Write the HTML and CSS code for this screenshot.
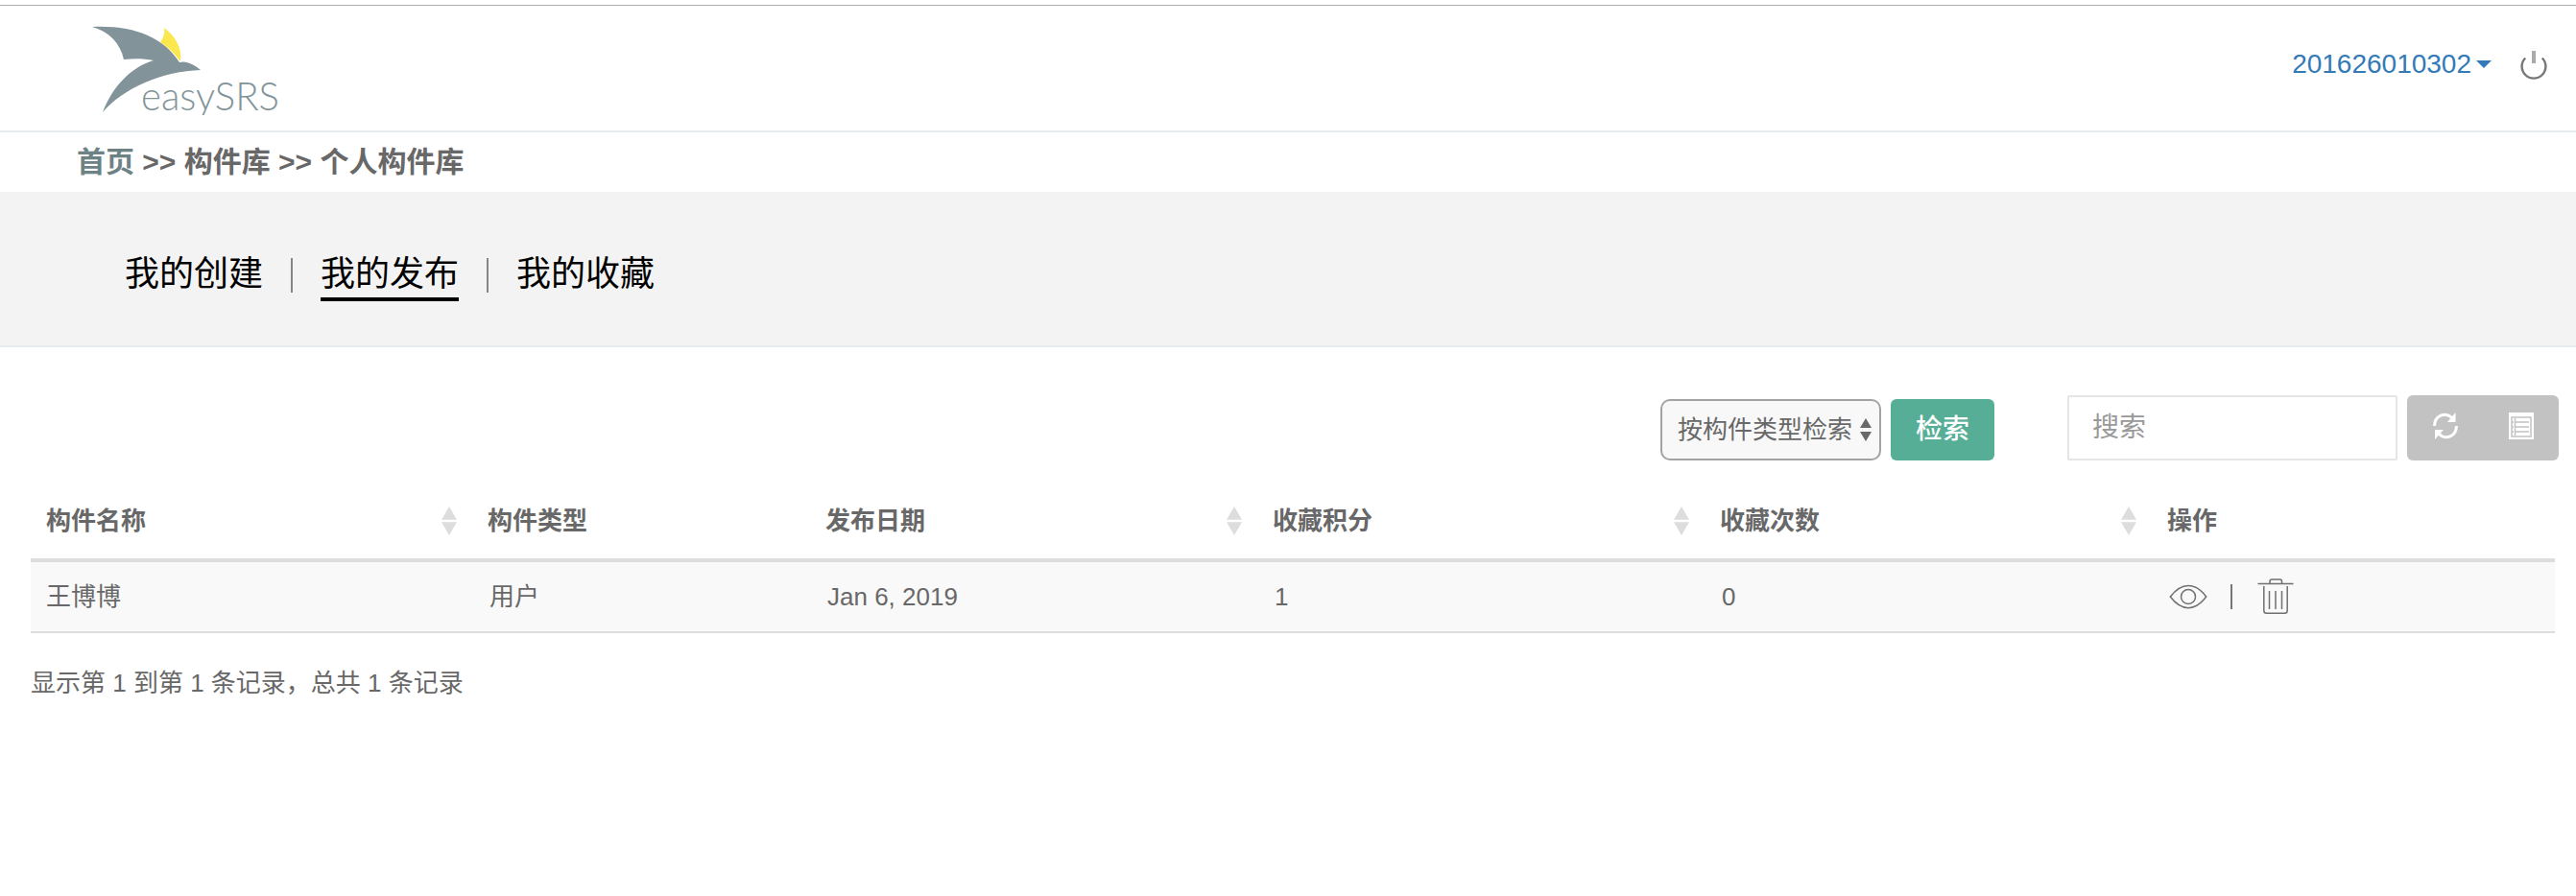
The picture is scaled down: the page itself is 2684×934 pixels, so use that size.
FILE: index.html
```html
<!DOCTYPE html>
<html lang="zh-CN">
<head>
    <meta charset="utf-8">
    <title>easySRS</title>
    <link rel="stylesheet" href="styles.css">
</head>
<body>

<header class="header">
    <a class="logo" href="#">
        <svg width="200" height="112" viewBox="0 0 200 112">
            <path fill="#82949a" d="M4 20C46 18 78 30 95 57C102 55 110 59 117 65C78 66 36 84 15 109C25 83 44 62 68 55C58 53 48 53 37 54C33 37 22 25 4 20Z"/>
            <path fill="#fbe74e" d="M79 21C91 30 98 42 96 56C89 47 83 41 75 36C78 32 80 27 79 21Z"/>
            <text class="logo-text" x="55" y="107" textLength="144" lengthAdjust="spacingAndGlyphs">easySRS</text>
        </svg>
    </a>
    <div class="user">
        <a class="user-name" href="#">201626010302<span class="caret"></span></a>
        <svg class="power" width="28" height="32" viewBox="0 0 28 32" fill="none" stroke="#777">
            <path stroke-width="2.4" d="M5.2 8.5A12.4 12.4 0 1 0 22.8 8.5"/>
            <path stroke="#aaa" stroke-width="4" d="M14 1V14"/>
        </svg>
    </div>
</header>

<div class="breadcrumb"><a href="#">首页</a> &gt;&gt; 构件库 &gt;&gt; 个人构件库</div>

<nav class="tabs">
    <a href="#">我的创建</a>
    <i></i>
    <a class="active" href="#">我的发布</a>
    <i></i>
    <a href="#">我的收藏</a>
</nav>

<div class="toolbar">
    <div class="type-select">按构件类型检索
        <svg width="12" height="24" viewBox="0 0 12 24" fill="#686868"><path d="M6 0L12 10H0ZM6 24L0 14H12Z"/></svg>
    </div>
    <button class="btn-search">检索</button>
    <input class="search" type="text" placeholder="搜索">
    <div class="btn-group">
        <svg width="26" height="28" viewBox="0 0 26 28">
            <path fill="none" stroke="#fff" stroke-width="3" d="M1.6 14C1.6 3 13-1 19.5 5.5M24.4 14C24.4 25 13 29 6.5 22.500"/>
            <path fill="#fff" d="M23.500 0V10H15ZM2 28V18H11Z"/>
        </svg>
        <svg width="26" height="28" viewBox="0 0 26 28">
            <path fill="#fff" d="M0 0H26V28H0Z"/>
            <path fill="none" stroke="#c2c2c2" stroke-width="1.500" d="M3 5H23V25H3ZM3 10H5M7 10H21M3 15H5M7 15H21M3 20H5M7 20H21M6.500 6V24"/>
        </svg>
    </div>
</div>

<table class="table">
    <colgroup>
        <col class="col-name"><col class="col-type"><col class="col-wide"><col class="col-wide"><col class="col-wide"><col>
    </colgroup>
    <thead>
        <tr>
            <th><div class="th-inner sortable">构件名称</div></th>
            <th><div class="th-inner">构件类型</div></th>
            <th><div class="th-inner sortable">发布日期</div></th>
            <th><div class="th-inner sortable">收藏积分</div></th>
            <th><div class="th-inner sortable">收藏次数</div></th>
            <th><div class="th-inner">操作</div></th>
        </tr>
    </thead>
    <tbody>
        <tr>
            <td>王博博</td>
            <td>用户</td>
            <td>Jan 6, 2019</td>
            <td>1</td>
            <td>0</td>
            <td>
                <div class="actions">
                    <svg width="40" height="26" viewBox="0 0 40 26" fill="none" stroke="#707070" stroke-width="1.500">
                        <path d="M1.300 13C13-2.500 27-2.500 38.700 13C27 28.500 13 28.500 1.300 13Z"/>
                        <circle cx="20" cy="13" r="7.500"/>
                    </svg>
                    <span class="bar"></span>
                    <svg width="38" height="38" viewBox="0 0 38 38" fill="none" stroke="#707070" stroke-width="1.500">
                        <path d="M0.500 5.500H37.500M13 5V3Q13 1 15 1H23.500Q25.500 1 25.500 3V5M6.800 8V33.500Q6.800 36.300 9.500 36.300H28.500Q31.200 36.300 31.200 33.500V8M12.500 13V32M19 13V32M25.500 13V32"/>
                    </svg>
                </div>
            </td>
        </tr>
    </tbody>
</table>

<div class="pagination-info">显示第 1 到第 1 条记录，总共 1 条记录</div>

</body>
</html>
```

FILE: styles.css
```css
* {
    box-sizing: border-box;
}
body {
    margin: 0;
    padding-top: 5px;
    background: #fff;
    color: #686868;
    font-family: "Liberation Sans", "Noto Sans CJK SC", sans-serif;
    font-size: 26px;
    line-height: 36px;
}
a {
    color: inherit;
    text-decoration: none;
}
svg {
    display: block;
}

/* Header */
.header {
    display: flex;
    justify-content: space-between;
    height: 133px;
    padding: 2px 30px 0 92px;
    border-top: 1px solid #aeaeae;
    border-bottom: 2px solid #e7ebee;
}
.logo-text {
    font-family: Lato, sans-serif;
    font-size: 41px;
    font-weight: 300;
    fill: #82949a;
}
.user {
    display: flex;
    align-items: flex-start;
    padding-top: 41px;
}
.user-name {
    display: flex;
    align-items: center;
    font-size: 28px;
    color: #337ab7;
}
.caret {
    margin-left: 5px;
    border-top: 8px solid;
    border-left: 8px solid transparent;
    border-right: 8px solid transparent;
}
.power {
    margin: 3px 0 0 30px;
}

.breadcrumb {
    height: 62px;
    padding: 0 80px;
    font-size: 30px;
    font-weight: bold;
    line-height: 62px;
}
.breadcrumb a {
    color: #6c8285;
}

/* Tabs */
.tabs {
    display: flex;
    align-items: flex-start;
    height: 162px;
    padding: 62px 130px 0;
    background: #f3f3f3;
    border-bottom: 2px solid #e7ebee;
    font-size: 36px;
    line-height: 48px;
    color: #000;
}
.tabs a {
    height: 52px;
}
.tabs .active {
    border-bottom: 4px solid #000;
}
.tabs i {
    width: 2px;
    height: 36px;
    margin: 7px 29px 0;
    background: #858585;
}

/* Toolbar */
.toolbar {
    display: flex;
    justify-content: flex-end;
    align-items: flex-end;
    height: 118px;
    padding-right: 18px;
}
.type-select {
    display: flex;
    align-items: center;
    justify-content: space-between;
    width: 230px;
    height: 64px;
    padding: 0 8px 0 16px;
    border: 2px solid #a3a3a3;
    border-radius: 10px;
    background: #f8f8f8;
    white-space: nowrap;
}
.btn-search {
    width: 108px;
    height: 64px;
    margin: 0 76px 0 10px;
    padding: 0;
    border: 0;
    border-radius: 6px;
    background: #55ae95;
    color: #fff;
    font: 500 28px/64px "Liberation Sans", "Noto Sans CJK SC", sans-serif;
}
.search {
    width: 344px;
    height: 68px;
    padding: 0 24px;
    border: 2px solid #e5e5e5;
    border-radius: 2px;
    font: 28px "Liberation Sans", "Noto Sans CJK SC", sans-serif;
}
.search::placeholder {
    color: #999;
}
.btn-group {
    display: flex;
    justify-content: space-between;
    width: 158px;
    height: 68px;
    margin-left: 10px;
    padding: 18px 26px 0 27px;
    border-radius: 6px;
    background: #c2c2c2;
}

/* Table */
.table {
    width: 2630px;
    margin: 24px 0 0 32px;
    table-layout: fixed;
    border-collapse: separate;
    border-spacing: 0;
}
.col-name {
    width: 460px;
}
.col-type {
    width: 352px;
}
.col-wide {
    width: 466px;
}
.table th {
    height: 82px;
    padding: 0;
    border-bottom: 4px solid #ddd;
    text-align: left;
}
.th-inner {
    padding: 0 16px;
}
.sortable {
    display: flex;
    align-items: center;
    justify-content: space-between;
}
.sortable::after {
    content: "";
    width: 16px;
    height: 30px;
    background: #ddd;
    clip-path: polygon(50% 0, 100% 46%, 0 46%, 0 54%, 100% 54%, 50% 100%, 0 54%, 0 46%);
}
.table td {
    height: 74px;
    padding: 0 18px;
    background: #f9f9f9;
    border-bottom: 2px solid #ddd;
}
.table td:first-child {
    padding-left: 16px;
}
.actions {
    display: flex;
    align-items: center;
}
.bar {
    width: 2px;
    height: 26px;
    margin: 0 26px 0 24px;
    background: #777;
}

.pagination-info {
    margin: 34px 32px 0;
}
```
